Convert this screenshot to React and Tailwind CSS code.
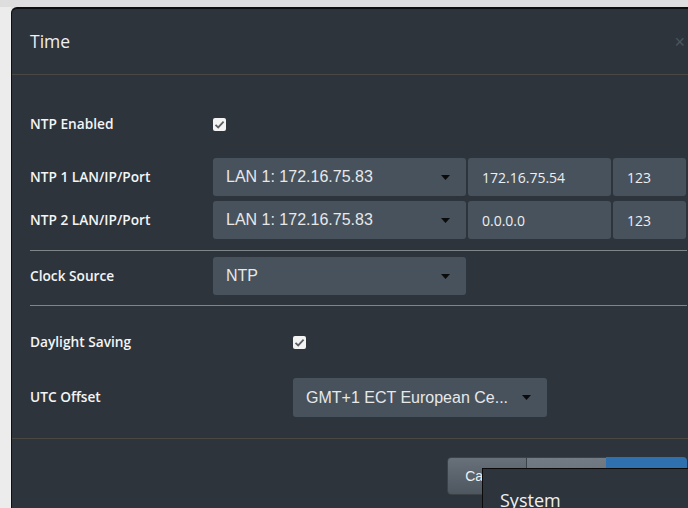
import React from "react";

const sans = "font-['Open_Sans',sans-serif]";
const arial = "font-['Liberation_Sans',Arial,sans-serif]";

function Caret() {
  return (
    <svg width="9" height="5" viewBox="0 0 9 5" className="shrink-0">
      <path d="M0 0 L9 0 L4.5 5 Z" fill="#0b0b0b" />
    </svg>
  );
}

function Check() {
  return (
    <span className="w-[13px] h-[13px] rounded-[2px] bg-[#f3f3f3] flex items-center justify-center">
      <svg width="11" height="11" viewBox="0 0 11 11">
        <path d="M1.5 5.8 L4.2 8.4 L9.6 2.6" fill="none" stroke="#5b5f63" strokeWidth="1.8" />
      </svg>
    </span>
  );
}

function Select({ value, className = "" }) {
  return (
    <div
      className={`h-[38px] rounded-[3px] bg-[#48525c] flex items-center justify-between pl-[13px] pr-[16px] text-[16px] text-[#e6e8ea] ${arial} ${className}`}
    >
      <span className="whitespace-nowrap">{value}</span>
      <Caret />
    </div>
  );
}

function Field({ value, className = "" }) {
  return (
    <div
      className={`h-[38px] rounded-[3px] bg-[#48525c] flex items-center pl-[14px] text-[14px] text-[#eceef0] ${sans} ${className}`}
    >
      {value}
    </div>
  );
}

const labelText = `text-[13.7px] font-semibold text-[#f4f5f6] ${sans}`;

function Label({ children, wide }) {
  return <div className={`${wide ? "w-[263px]" : "w-[183px]"} shrink-0 ${labelText}`}>{children}</div>;
}

export default function App() {
  return (
    <div className="relative w-[688px] h-[508px] overflow-hidden bg-[#e4e4e4]">
      <div className="h-[7px] bg-[#dedede]" />
      <div className="flex">
        {/* page behind the dialog */}
        <div className="w-[11px] shrink-0 h-[501px] bg-[#ececec]" />

        <div className="w-[694px] shrink-0 h-[520px] bg-[#2e343b] border-t-2 border-l border-[#0e0f10] rounded-tl-[6px]">
          {/* header */}
          <div className="h-[66px] flex items-center justify-between pl-[18px] pr-[20px] border-b border-[#4a4843]">
            <span className={`text-[17.5px] text-[#eef0f2] ${sans}`}>Time</span>
            <span className={`text-[18px] leading-none text-[#4b545d] ${arial}`}>×</span>
          </div>

          {/* body */}
          <div className="pl-[18px] w-[675px]">
            <div className="mt-[30px] h-[38px] flex items-center">
              <Label>NTP Enabled</Label>
              <Check />
            </div>

            <div className="mt-[15px] flex items-center">
              <Label>NTP 1 LAN/IP/Port</Label>
              <Select value="LAN 1: 172.16.75.83" className="w-[253px]" />
              <Field value="172.16.75.54" className="ml-[2px] w-[143px]" />
              <Field value="123" className="ml-[2px] w-[73px]" />
            </div>

            <div className="mt-[5px] flex items-center">
              <Label>NTP 2 LAN/IP/Port</Label>
              <Select value="LAN 1: 172.16.75.83" className="w-[253px]" />
              <Field value="0.0.0.0" className="ml-[2px] w-[143px]" />
              <Field value="123" className="ml-[2px] w-[73px]" />
            </div>

            <div className="mt-[11px] h-px bg-[#80858a]" />

            <div className="mt-[6px] flex items-center">
              <Label>Clock Source</Label>
              <Select value="NTP" className="w-[253px]" />
            </div>

            <div className="mt-[10px] h-px bg-[#80858a]" />

            <div className="mt-[17px] h-[38px] flex items-center">
              <Label wide>Daylight Saving</Label>
              <Check />
            </div>

            <div className="mt-[17px] flex items-center">
              <Label wide>UTC Offset</Label>
              <Select value="GMT+1 ECT European Ce..." className="w-[254px] h-[39px]" />
            </div>
          </div>

          {/* footer */}
          <div className="mt-[21px] border-t border-[#4a4843] pt-[18px] pl-[435px] flex">
            <button
              className={`w-[80px] h-[38px] rounded-l-[4px] bg-gradient-to-b from-[#68717a] to-[#4e575f] border border-[#3b4248] text-[14px] text-[#eef0f2] ${arial}`}
            >
              Cancel
            </button>
            <button
              className={`w-[79px] h-[38px] bg-gradient-to-b from-[#737b84] to-[#626a73] border-y border-[#3b4248] text-[14px] text-[#eef0f2] ${arial}`}
            >
              Apply
            </button>
            <button
              className={`w-[81px] h-[38px] rounded-r-[4px] bg-[#2f70ae] text-[14px] text-white ${arial}`}
            >
              OK
            </button>
          </div>
        </div>
      </div>

      {/* flyout menu over the dialog */}
      <div className="absolute left-[482px] top-[468px] w-[240px] h-[80px] bg-[#2e343b] border-t border-l border-[#0a0a0a] pl-[17px] pt-[17px]">
        <span className={`text-[18px] leading-[28px] text-[#eef0f2] ${sans}`}>System</span>
      </div>
    </div>
  );
}
